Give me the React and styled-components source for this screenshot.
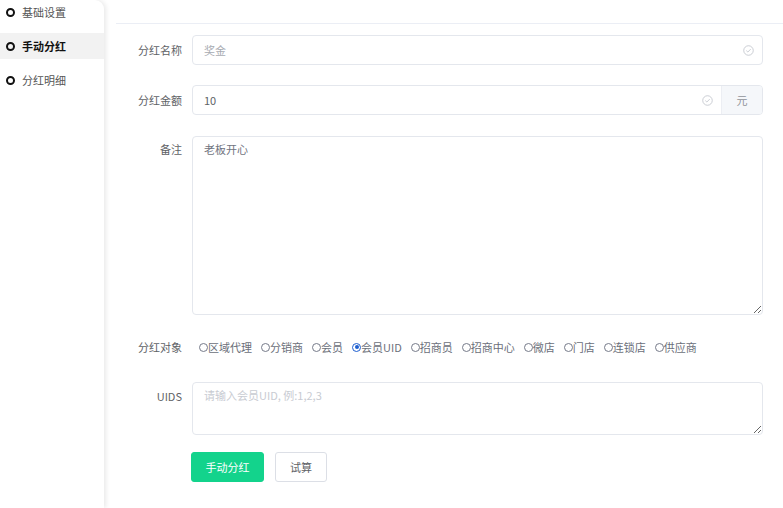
import React from "react";
import styled, { createGlobalStyle } from "styled-components";

const Global = createGlobalStyle`
  html, body { margin: 0; padding: 0; background: #fff; }
  body { font-family: "Noto Sans CJK SC", "Microsoft YaHei", sans-serif; font-size: 11px; color: #606266; }
  * { box-sizing: border-box; }
`;

const Page = styled.div`
  display: flex;
  min-height: 508px;
  width: 783px;
  overflow: hidden;
`;

const Sidebar = styled.nav`
  width: 104px;
  flex-shrink: 0;
  background: #fff;
  border-top-right-radius: 9px;
  box-shadow: 2px 0 5px rgba(0, 0, 0, 0.09);
  position: relative;
  z-index: 1;
`;

const NavList = styled.div`
  display: flex;
  flex-direction: column;
  gap: 8px;
  margin-top: -1px;
`;

const NavItem = styled.div`
  display: flex;
  align-items: center;
  height: 26px;
  padding-left: 6px;
  gap: 7px;
  background: ${(p) => (p.$active ? "#f2f2f2" : "transparent")};
  color: ${(p) => (p.$active ? "#111" : "#555")};
  font-weight: ${(p) => (p.$active ? 700 : 400)};
  font-size: 11px;
`;

const NavDot = styled.span`
  width: 9px;
  height: 9px;
  border: 2px solid #111;
  border-radius: 50%;
  flex-shrink: 0;
`;

const Main = styled.main`
  flex: 1;
  padding-left: 12px;
  padding-right: 20px;
`;

const TopBar = styled.div`
  height: 24px;
  border-bottom: 1px solid #ebeef5;
  margin-right: -20px;
`;

const Form = styled.form`
  padding-top: 11px;
  display: flex;
  flex-direction: column;
`;

const Row = styled.div`
  display: flex;
  align-items: ${(p) => (p.$top ? "flex-start" : "center")};
  margin-bottom: ${(p) => p.$mb || 20}px;
`;

const Label = styled.label`
  width: 76px;
  padding-right: 10px;
  text-align: right;
  flex-shrink: 0;
  color: #606266;
  line-height: ${(p) => (p.$lh ? p.$lh : 30)}px;
`;

const Field = styled.div`
  flex: 1;
  display: flex;
  height: 30px;
  border: 1px solid #e4e7ed;
  border-radius: 4px;
  background: #fff;
  overflow: hidden;
`;

const Input = styled.input`
  flex: 1;
  border: none;
  outline: none;
  padding: 0 11px;
  font: inherit;
  font-size: 11px;
  color: #606266;
  background: transparent;
  &::placeholder { color: #a8abb2; }
`;

const CheckWrap = styled.span`
  display: flex;
  align-items: center;
  padding-right: 8px;
`;

const Addon = styled.span`
  width: 41px;
  display: flex;
  align-items: center;
  justify-content: center;
  background: #f5f7fa;
  border-left: 1px solid #eceef3;
  color: #909399;
`;

const TextArea = styled.textarea`
  flex: 1;
  height: ${(p) => p.$h}px;
  border: 1px solid #e4e7ed;
  border-radius: 4px;
  padding: 5px 11px;
  font: inherit;
  font-size: 11px;
  line-height: 15px;
  color: #707480;
  outline: none;
  resize: vertical;
  &::placeholder { color: #c8cbd2; }
`;

const Radios = styled.div`
  display: flex;
  align-items: center;
  padding-left: 7px;
`;

const RadioItem = styled.span`
  display: inline-flex;
  align-items: center;
  margin-right: 9px;
  color: #6b6f7a;
  white-space: nowrap;
`;

const RadioDot = styled.span`
  width: 9px;
  height: 9px;
  border-radius: 50%;
  border: 1.5px solid ${(p) => (p.$on ? "#1e5fd0" : "#767b8a")};
  display: inline-flex;
  align-items: center;
  justify-content: center;
  &::after {
    content: "";
    width: 4px;
    height: 4px;
    border-radius: 50%;
    background: ${(p) => (p.$on ? "#1e5fd0" : "transparent")};
  }
`;

const Buttons = styled.div`
  display: flex;
  gap: 11px;
  padding-left: 75px;
`;

const Button = styled.button`
  height: 30px;
  padding: 0;
  width: ${(p) => (p.$primary ? 73 : 52)}px;
  border-radius: 3px;
  border: 1px solid ${(p) => (p.$primary ? "#13d38c" : "#dcdfe6")};
  background: ${(p) => (p.$primary ? "#13d38c" : "#fff")};
  color: ${(p) => (p.$primary ? "#fff" : "#606266")};
  font: inherit;
  font-size: 11px;
`;

const CheckIcon = () => (
  <svg width="11" height="11" viewBox="0 0 12 12">
    <circle cx="6" cy="6" r="5.2" fill="none" stroke="#c6c9d0" strokeWidth="1" />
    <path d="M3.6 6.1 L5.3 7.7 L8.4 4.5" fill="none" stroke="#c6c9d0" strokeWidth="1" />
  </svg>
);

const targets = ["区域代理", "分销商", "会员", "会员UID", "招商员", "招商中心", "微店", "门店", "连锁店", "供应商"];

export default function App() {
  return (
    <>
      <Global />
      <Page>
        <Sidebar>
          <NavList>
            <NavItem><NavDot />基础设置</NavItem>
            <NavItem $active><NavDot />手动分红</NavItem>
            <NavItem><NavDot />分红明细</NavItem>
          </NavList>
        </Sidebar>
        <Main>
          <TopBar />
          <Form onSubmit={(e) => e.preventDefault()}>
            <Row>
              <Label>分红名称</Label>
              <Field>
                <Input placeholder="奖金" />
                <CheckWrap><CheckIcon /></CheckWrap>
              </Field>
            </Row>
            <Row $mb={21}>
              <Label>分红金额</Label>
              <Field>
                <Input defaultValue="10" />
                <CheckWrap><CheckIcon /></CheckWrap>
                <Addon>元</Addon>
              </Field>
            </Row>
            <Row $top $mb={20}>
              <Label $lh={26}>备注</Label>
              <TextArea $h={179} defaultValue="老板开心" />
            </Row>
            <Row $mb={23}>
              <Label $lh={24}>分红对象</Label>
              <Radios>
                {targets.map((t) => (
                  <RadioItem key={t}>
                    <RadioDot $on={t === "会员UID"} />
                    {t}
                  </RadioItem>
                ))}
              </Radios>
            </Row>
            <Row $top $mb={17}>
              <Label $lh={28}>UIDS</Label>
              <TextArea $h={53} placeholder="请输入会员UID, 例:1,2,3" />
            </Row>
            <Buttons>
              <Button $primary type="button">手动分红</Button>
              <Button type="button">试算</Button>
            </Buttons>
          </Form>
        </Main>
      </Page>
    </>
  );
}
